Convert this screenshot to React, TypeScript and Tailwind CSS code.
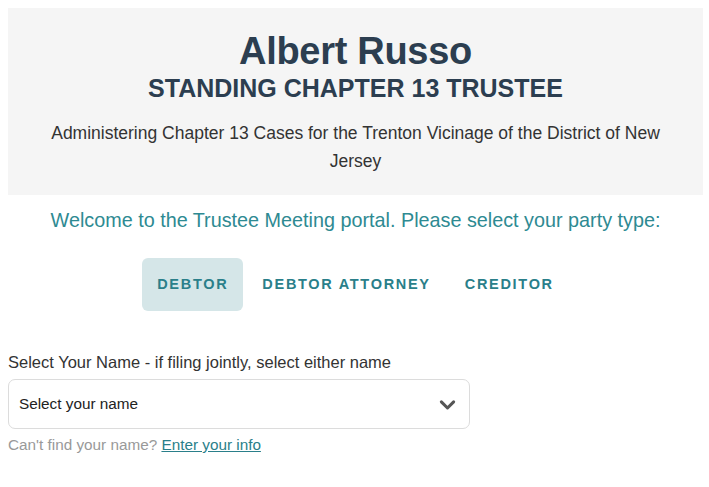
import { useState } from "react";

const PARTIES = ["Debtor", "Debtor Attorney", "Creditor"];

export default function App() {
  const [party, setParty] = useState("Debtor");

  return (
    <main className="min-h-screen bg-white py-2 pl-2 font-['Liberation_Sans',Arial,sans-serif]">
      <header className="w-[695px] bg-[#f5f5f5] px-4 pb-[20px] pt-[21px] text-center">
        <h1 className="text-[38px] font-bold leading-[44px] tracking-[-0.3px] text-[#2c3e50]">Albert Russo</h1>
        <h2 className="text-[25px] font-bold leading-[30px] text-[#2c3e50]">STANDING CHAPTER 13 TRUSTEE</h2>
        <p className="mx-auto mt-[16px] max-w-[640px] text-[17.5px] leading-[28px] text-[#333]">
          Administering Chapter 13 Cases for the Trenton Vicinage of the District of New Jersey
        </p>
      </header>

      <p className="mt-[11px] w-[695px] text-center text-[19.8px] leading-[28px] text-[#2e8a92]">
        Welcome to the Trustee Meeting portal. Please select your party type:
      </p>

      <div className="mt-[24px] flex w-[695px] justify-center gap-[4px]">
        {PARTIES.map((p) => (
          <button
            key={p}
            type="button"
            onClick={() => setParty(p)}
            className={`h-[53px] rounded-[6px] px-[15px] text-[14.5px] font-bold uppercase tracking-[1.7px] text-[#2a7f8a] ${
              party === p ? "bg-[#d5e6e8]" : "bg-transparent"
            }`}
          >
            {p}
          </button>
        ))}
      </div>

      <section className="mt-[41px] w-[462px]">
        <label className="block text-[16.5px] leading-[20px] text-[#333]">
          Select Your Name - if filing jointly, select either name
        </label>
        <div className="mt-[7px] flex h-[50px] items-center justify-between rounded-[7px] border border-[#dcdcdc] bg-white pl-[10px] pr-[11px]">
          <span className="text-[15.3px] text-[#222]">Select your name</span>
          <svg width="21" height="21" viewBox="0 0 24 24" fill="none" stroke="#555" strokeWidth="3.5" strokeLinecap="round" strokeLinejoin="round">
            <path d="M5 9l7 7 7-7" />
          </svg>
        </div>
        <p className="mt-[7px] text-[15.3px] leading-[18px] text-[#999]">
          Can't find your name?{" "}
          <a href="#" className="text-[#2a7f8a] underline">
            Enter your info
          </a>
        </p>
      </section>
    </main>
  );
}
